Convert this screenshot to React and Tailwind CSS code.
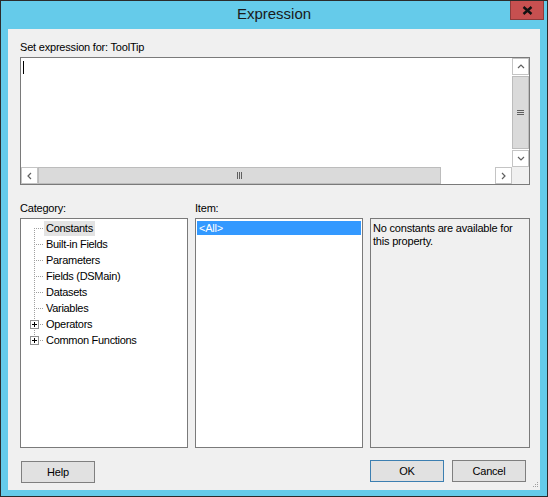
import React from 'react';

const categories = [
  { name: 'Constants', selected: true },
  { name: 'Built-in Fields' },
  { name: 'Parameters' },
  { name: 'Fields (DSMain)' },
  { name: 'Datasets' },
  { name: 'Variables' },
  { name: 'Operators', expandable: true },
  { name: 'Common Functions', expandable: true },
];

function Chevron({ dir }) {
  const paths = {
    up: 'M1 5l3-3 3 3',
    down: 'M1 2l3 3 3-3',
    left: 'M5 1L2 4l3 3',
    right: 'M2 1l3 3-3 3',
  };
  return (
    <svg width="8" height="8" viewBox="0 0 8 8" fill="none" stroke="#606060" strokeWidth="1.2">
      <path d={paths[dir]} />
    </svg>
  );
}

function ScrollButton({ dir, className = '' }) {
  return (
    <div className={`w-[17px] h-[17px] shrink-0 bg-white border border-[#c4c4c4] flex items-center justify-center ${className}`}>
      <Chevron dir={dir} />
    </div>
  );
}

function TreeConnector({ first, last, expandable }) {
  const y1 = first ? 8 : 0;
  const y2 = last ? 8 : 16;
  return (
    <svg width="16" height="16" viewBox="0 0 16 16" className="shrink-0">
      <line x1="6.5" y1={y1} x2="6.5" y2={y2} stroke="#a0a0a0" strokeDasharray="1 1" />
      <line x1="8" y1="8.5" x2="16" y2="8.5" stroke="#a0a0a0" strokeDasharray="1 1" />
      {expandable && (
        <g>
          <rect x="2.5" y="4.5" width="8" height="8" fill="#fff" stroke="#919191" />
          <line x1="4" y1="8.5" x2="9" y2="8.5" stroke="#000" />
          <line x1="6.5" y1="6" x2="6.5" y2="11" stroke="#000" />
        </g>
      )}
    </svg>
  );
}

function ExpressionBox() {
  return (
    <div className="w-[510px] h-[128px] border border-[#7a7a7a] bg-white flex flex-col">
      <div className="flex flex-1 min-h-0">
        <div className="flex-1 pl-[2px] pt-[3px]">
          <div className="w-px h-[13px] bg-black" />
        </div>
        {/* vertical scrollbar */}
        <div className="w-[17px] flex flex-col">
          <ScrollButton dir="up" />
          <div className="flex-1 bg-white py-px">
            <div className="h-full bg-[#dadada] border border-[#bcbcbc] flex flex-col items-center justify-center gap-[1px]">
              <div className="w-[7px] h-px bg-[#606060]" />
              <div className="w-[7px] h-px bg-[#606060]" />
              <div className="w-[7px] h-px bg-[#606060]" />
            </div>
          </div>
          <ScrollButton dir="down" />
        </div>
      </div>
      {/* horizontal scrollbar */}
      <div className="h-[17px] flex shrink-0">
        <ScrollButton dir="left" />
        <div className="w-[403px] bg-[#dadada] border border-[#bcbcbc] flex items-center justify-center gap-[1px]">
          <div className="w-px h-[7px] bg-[#606060]" />
          <div className="w-px h-[7px] bg-[#606060]" />
          <div className="w-px h-[7px] bg-[#606060]" />
        </div>
        <div className="flex-1 bg-white" />
        <ScrollButton dir="right" />
        <div className="w-[17px] bg-[#f0f0f0]" />
      </div>
    </div>
  );
}

function WinButton({ children, isDefault }) {
  return (
    <button
      className={`w-[74px] h-[22px] bg-[#e1e1e1] border text-[11px] tracking-[-0.2px] text-black ${
        isDefault ? 'border-[#3c7fb1]' : 'border-[#7f7f7f]'
      }`}
    >
      {children}
    </button>
  );
}

export default function App() {
  return (
    <div className="w-[548px] h-[497px] bg-[#65cbea] border border-[#2b2b2b] flex flex-col font-['Liberation_Sans',Arial,sans-serif] text-black select-none">
      {/* Title bar */}
      <div className="relative h-[28px] shrink-0 flex items-center justify-center">
        <span className="text-[15px] text-[#1a1a1a] pb-[1px]">Expression</span>
        <div className="absolute right-[3px] top-0 w-[34px] h-[19px] bg-[#c75050] border border-[#8c3b3b] border-t-0 flex items-center justify-center">
          <svg width="11" height="9" viewBox="0 0 11 9">
            <path d="M1.5 1l8 7M9.5 1l-8 7" stroke="#111" strokeWidth="2.4" />
          </svg>
        </div>
      </div>

      {/* Client area */}
      <div className="relative mx-[7px] h-[461px] bg-[#f0f0f0] pl-[12px] pr-[10px] pt-[12px] flex flex-col">
        <div className="text-[11px] leading-[13px] tracking-[-0.2px] mb-[3px]">Set expression for: ToolTip</div>
        <ExpressionBox />

        <div className="flex gap-[7px] mt-[17px]">
          <div className="w-[168px]">
            <div className="text-[11px] leading-[13px] tracking-[-0.2px] mb-[3px]">Category:</div>
            <div className="h-[230px] border border-[#7a7a7a] bg-white pt-[1px]">
              {categories.map((c, i) => (
                <div key={c.name} className="flex items-center h-4 pl-[7px]">
                  <TreeConnector first={i === 0} last={i === categories.length - 1} expandable={c.expandable} />
                  <span
                    className={`text-[11px] leading-[15px] tracking-[-0.3px] px-[2px] whitespace-nowrap ${
                      c.selected ? 'bg-[#e3e3e3]' : ''
                    }`}
                  >
                    {c.name}
                  </span>
                </div>
              ))}
            </div>
          </div>

          <div className="w-[168px]">
            <div className="text-[11px] leading-[13px] tracking-[-0.2px] mb-[3px]">Item:</div>
            <div className="h-[230px] border border-[#7a7a7a] bg-white p-px">
              <div className="bg-[#3399ff] text-white text-[11px] leading-[14px] tracking-[-0.2px] px-[2px] mt-px">&lt;All&gt;</div>
            </div>
          </div>

          <div className="w-[160px]">
            <div className="h-[13px] mb-[3px]" />
            <div className="h-[230px] border border-[#7a7a7a] bg-[#f0f0f0] px-[2px] pt-[3px] text-[11px] leading-[13px] tracking-[-0.2px]">
              No constants are available for this property.
            </div>
          </div>
        </div>

        <div className="flex items-center mt-[11px] pr-[4px]">
          <div className="ml-[1px]">
            <WinButton>Help</WinButton>
          </div>
          <div className="ml-auto flex gap-[8px]">
            <WinButton isDefault>OK</WinButton>
            <WinButton>Cancel</WinButton>
          </div>
        </div>

        {/* resize grip */}
        <svg className="absolute right-[1px] bottom-[2px]" width="7" height="7" viewBox="0 0 7 7">
          <rect x="5" y="1" width="1" height="1" fill="#a0a0a0" />
          <rect x="3" y="3" width="1" height="1" fill="#a0a0a0" />
          <rect x="5" y="3" width="1" height="1" fill="#a0a0a0" />
          <rect x="1" y="5" width="1" height="1" fill="#a0a0a0" />
          <rect x="3" y="5" width="1" height="1" fill="#a0a0a0" />
          <rect x="5" y="5" width="1" height="1" fill="#a0a0a0" />
        </svg>
      </div>
    </div>
  );
}
